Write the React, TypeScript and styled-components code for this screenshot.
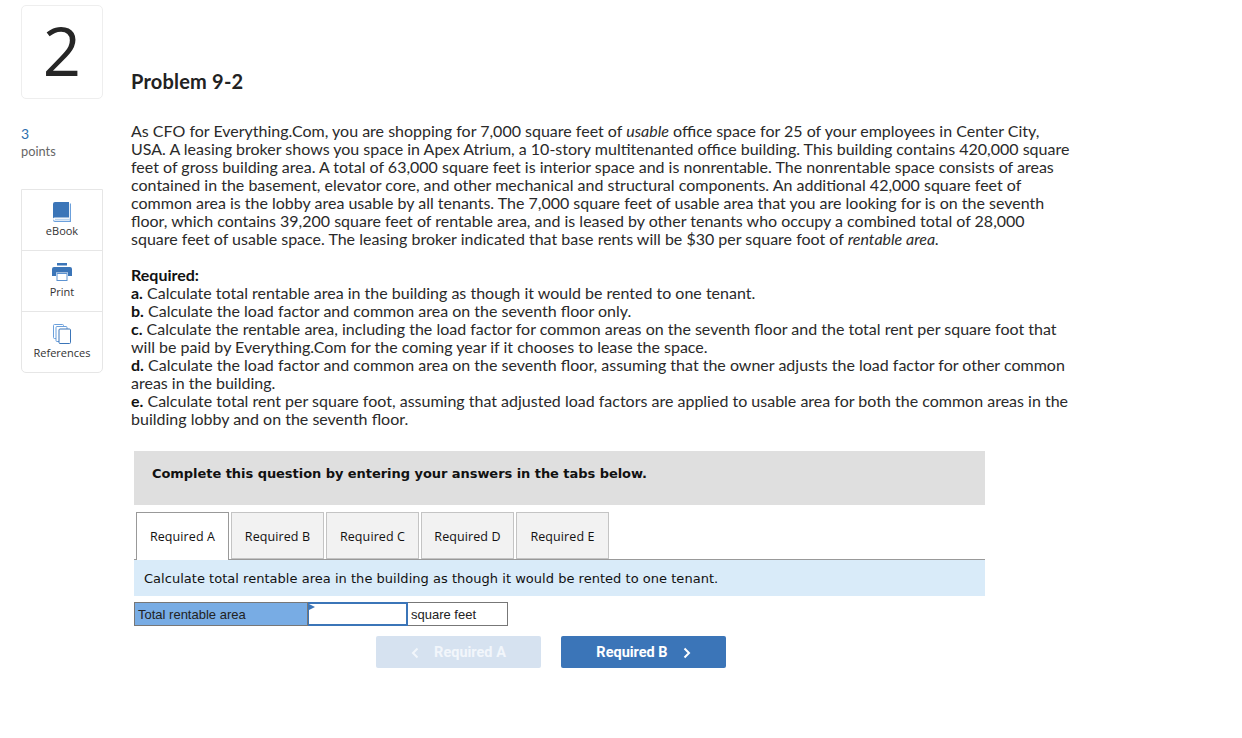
import React from "react";
import styled, { createGlobalStyle } from "styled-components";

const Global = createGlobalStyle`
  html, body { margin: 0; padding: 0; background: #fff; }
  body { width: 1242px; height: 738px; overflow: hidden; font-family: Lato, "Noto Sans", sans-serif; color: #222; }
`;

const Page = styled.div`
  display: grid;
  grid-template-columns: 82px 1fr;
  column-gap: 28px;
  padding: 5px 0 0 21px;
`;
const Side = styled.aside`
  display: flex;
  flex-direction: column;
`;
const NumberBox = styled.div`
  width: 82px;
  height: 94px;
  box-sizing: border-box;
  border: 1px solid #eee;
  border-radius: 5px;
  padding-bottom: 3px;
  display: flex;
  align-items: center;
  justify-content: center;
  font-family: "Open Sans", sans-serif;
  font-size: 67px;
  line-height: 1;
  color: #262626;
`;
const Points = styled.div`
  margin-top: 26px;
  display: flex;
  flex-direction: column;
  font-family: Lato, sans-serif;
  font-size: 12.8px;
  line-height: 17px;
  color: #666;
`;
const PointsValue = styled.span`
  font-size: 14px;
  line-height: 18px;
  color: #2d6fae;
`;
const Tools = styled.div`
  margin-top: 29px;
  width: 82px;
  box-sizing: border-box;
  border: 1px solid #e6e6e6;
  border-radius: 0 0 5px 5px;
`;
const Tool = styled.div`
  height: 61px;
  box-sizing: border-box;
  display: flex;
  flex-direction: column;
  align-items: center;
  padding-top: 12px;
  font-family: "Open Sans", sans-serif;
  font-size: 11px;
  line-height: 16px;
  color: #333;
  &:first-child { height: 60px; }
  & + & { border-top: 1px solid #e6e6e6; }
`;
const IconSlot = styled.div`
  height: 21px;
  display: flex;
  align-items: flex-start;
  justify-content: center;
`;
const Main = styled.main`
  display: flex;
  flex-direction: column;
  padding-top: 64px;
`;
const Title = styled.h1`
  margin: 0;
  font-family: Lato, sans-serif;
  font-size: 20px;
  font-weight: 700;
  line-height: 24px;
  color: #222;
  letter-spacing: 0.2px;
`;
const Para = styled.p`
  margin: 29px 0 0;
  font-family: Lato, sans-serif;
  font-size: 16px;
  line-height: 18px;
  color: #2a2a2a;
  white-space: nowrap;
`;
const ReqPara = styled(Para)`
  margin-top: 18px;
`;
const Panel = styled.section`
  margin: 23px 0 0 3px;
  width: 851px;
  display: flex;
  flex-direction: column;
`;
const Banner = styled.div`
  height: 54px;
  box-sizing: border-box;
  background: #dfdfdf;
  padding: 15px 18px;
  font-family: "DejaVu Sans", sans-serif;
  font-size: 13px;
  font-weight: 700;
  line-height: 16px;
  letter-spacing: -0.05px;
  color: #111;
`;
const TabBar = styled.div`
  margin-top: 7px;
  padding-left: 2px;
  height: 48px;
  box-sizing: border-box;
  display: flex;
  gap: 2px;
  border-bottom: 1px solid #999;
`;
const Tab = styled.div<{ $active?: boolean }>`
  width: 93px;
  height: ${p => (p.$active ? "48px" : "47px")};
  box-sizing: border-box;
  border: 1px solid ${p => (p.$active ? "#999" : "#c4c4c4")};
  border-bottom: ${p => (p.$active ? "none" : "1px solid #c4c4c4")};
  background: ${p => (p.$active ? "#fff" : "#f2f2f2")};
  padding-top: ${p => (p.$active ? "0" : "1px")};
  display: flex;
  align-items: center;
  justify-content: center;
  font-family: "Open Sans", sans-serif;
  font-size: 12.5px;
  letter-spacing: 0.1px;
  color: #111;
`;
const Instruction = styled.div`
  height: 36px;
  background: #d9ebf9;
  padding: 0 10px;
  display: flex;
  align-items: center;
  font-family: "DejaVu Sans", sans-serif;
  font-size: 13px;
  letter-spacing: 0.025px;
  color: #111;
`;
const AnswerRow = styled.div`
  margin-top: 6px;
  display: flex;
  height: 24px;
  font-family: "Liberation Sans", sans-serif;
  font-size: 13px;
`;
const Label = styled.div`
  width: 174px;
  box-sizing: border-box;
  border: 1px solid #777;
  background: #78ace4;
  padding-left: 3px;
  display: flex;
  align-items: center;
  color: #222;
`;
const Input = styled.div`
  position: relative;
  width: 100px;
  box-sizing: border-box;
  border: 2px solid #3b75b8;
  border-left-width: 1px;
  background: #fff;
  &::before {
    content: "";
    position: absolute;
    left: 0;
    top: 0;
    border-left: 6px solid #3b75b8;
    border-top: 3px solid transparent;
    border-bottom: 3px solid transparent;
  }
`;
const Unit = styled.div`
  width: 100px;
  box-sizing: border-box;
  border: 1px solid #777;
  border-left: none;
  padding-left: 3px;
  display: flex;
  align-items: center;
  color: #222;
`;
const Nav = styled.div`
  margin: 10px 0 0 242px;
  display: flex;
  gap: 20px;
`;
const NavButton = styled.div<{ $disabled?: boolean }>`
  width: 165px;
  height: 32px;
  box-sizing: border-box;
  padding-top: 1px;
  border-radius: 2px;
  background: ${p => (p.$disabled ? "#d6e2f0" : "#3b75b8")};
  color: ${p => (p.$disabled ? "#f2f6fb" : "#fff")};
  display: flex;
  align-items: center;
  justify-content: center;
  gap: 15px;
  font-family: "Liberation Sans Narrow", "Roboto", sans-serif;
  font-size: 14.5px;
  font-weight: 700;
`;
const Bold = styled.b`
  font-weight: 700;
  color: #111;
`;

const Chevron = ({ dir }: { dir: "left" | "right" }) => (
  <svg width="8" height="12" viewBox="0 0 8 12" fill="none">
    <path d={dir === "left" ? "M6.5 1.5 L2 6 L6.5 10.5" : "M1.5 1.5 L6 6 L1.5 10.5"} stroke="currentColor" strokeWidth="2" />
  </svg>
);

const BookIcon = () => (
  <svg width="18" height="20" viewBox="0 0 18 20">
    <path d="M0 2a2 2 0 0 1 2-2h14v15.5H2a2 2 0 0 0-2 1z" fill="#3b75b8" />
    <path d="M16.8 1.5H18V20H2a2 2 0 0 1-2-2v-1a2 2 0 0 0 2 1.8h14.8z" fill="#6ba0dc" />
    <path d="M2 16.8h14.8v1H2z" fill="#a9c8ea" />
  </svg>
);
const PrintIcon = () => (
  <svg width="20" height="18" viewBox="0 0 20 18">
    <rect x="5" y="0" width="10" height="2.5" fill="#3b75b8" />
    <path d="M2 4h16a2 2 0 0 1 2 2v7h-4V9.5H4V13H0V6a2 2 0 0 1 2-2z" fill="#3b75b8" />
    <rect x="5" y="10.5" width="10" height="7" fill="#fff" stroke="#5d93d1" />
  </svg>
);
const RefIcon = () => (
  <svg width="18" height="20" viewBox="0 0 18 20" fill="#fff" stroke="#6ba0dc" strokeWidth="1">
    <rect x="0.5" y="0.5" width="10" height="14" rx="1" />
    <rect x="3" y="2.5" width="11" height="15" rx="1" />
    <rect x="6" y="5" width="11.5" height="14.5" rx="1" stroke="#3b75b8" />
  </svg>
);

export default function App() {
  return (
    <>
      <Global />
      <Page>
        <Side>
          <NumberBox>2</NumberBox>
          <Points>
            <PointsValue>3</PointsValue>
            <span>points</span>
          </Points>
          <Tools>
            <Tool><IconSlot><BookIcon /></IconSlot>eBook</Tool>
            <Tool><IconSlot><PrintIcon /></IconSlot>Print</Tool>
            <Tool><IconSlot><RefIcon /></IconSlot>References</Tool>
          </Tools>
        </Side>
        <Main>
          <Title>Problem 9-2</Title>
          <Para>
            As CFO for Everything.Com, you are shopping for 7,000 square feet of <i>usable</i> office space for 25 of your employees in Center City,<br />
            USA. A leasing broker shows you space in Apex Atrium, a 10-story multitenanted office building. This building contains 420,000 square<br />
            feet of gross building area. A total of 63,000 square feet is interior space and is nonrentable. The nonrentable space consists of areas<br />
            contained in the basement, elevator core, and other mechanical and structural components. An additional 42,000 square feet of<br />
            common area is the lobby area usable by all tenants. The 7,000 square feet of usable area that you are looking for is on the seventh<br />
            floor, which contains 39,200 square feet of rentable area, and is leased by other tenants who occupy a combined total of 28,000<br />
            square feet of usable space. The leasing broker indicated that base rents will be $30 per square foot of <i>rentable area.</i>
          </Para>
          <ReqPara>
            <Bold>Required:</Bold><br />
            <Bold>a.</Bold> Calculate total rentable area in the building as though it would be rented to one tenant.<br />
            <Bold>b.</Bold> Calculate the load factor and common area on the seventh floor only.<br />
            <Bold>c.</Bold> Calculate the rentable area, including the load factor for common areas on the seventh floor and the total rent per square foot that<br />
            will be paid by Everything.Com for the coming year if it chooses to lease the space.<br />
            <Bold>d.</Bold> Calculate the load factor and common area on the seventh floor, assuming that the owner adjusts the load factor for other common<br />
            areas in the building.<br />
            <Bold>e.</Bold> Calculate total rent per square foot, assuming that adjusted load factors are applied to usable area for both the common areas in the<br />
            building lobby and on the seventh floor.
          </ReqPara>
          <Panel>
            <Banner>Complete this question by entering your answers in the tabs below.</Banner>
            <TabBar>
              <Tab $active>Required A</Tab>
              <Tab>Required B</Tab>
              <Tab>Required C</Tab>
              <Tab>Required D</Tab>
              <Tab>Required E</Tab>
            </TabBar>
            <Instruction>Calculate total rentable area in the building as though it would be rented to one tenant.</Instruction>
            <AnswerRow>
              <Label>Total rentable area</Label>
              <Input />
              <Unit>square feet</Unit>
            </AnswerRow>
            <Nav>
              <NavButton $disabled><Chevron dir="left" />Required A</NavButton>
              <NavButton>Required B<Chevron dir="right" /></NavButton>
            </Nav>
          </Panel>
        </Main>
      </Page>
    </>
  );
}
